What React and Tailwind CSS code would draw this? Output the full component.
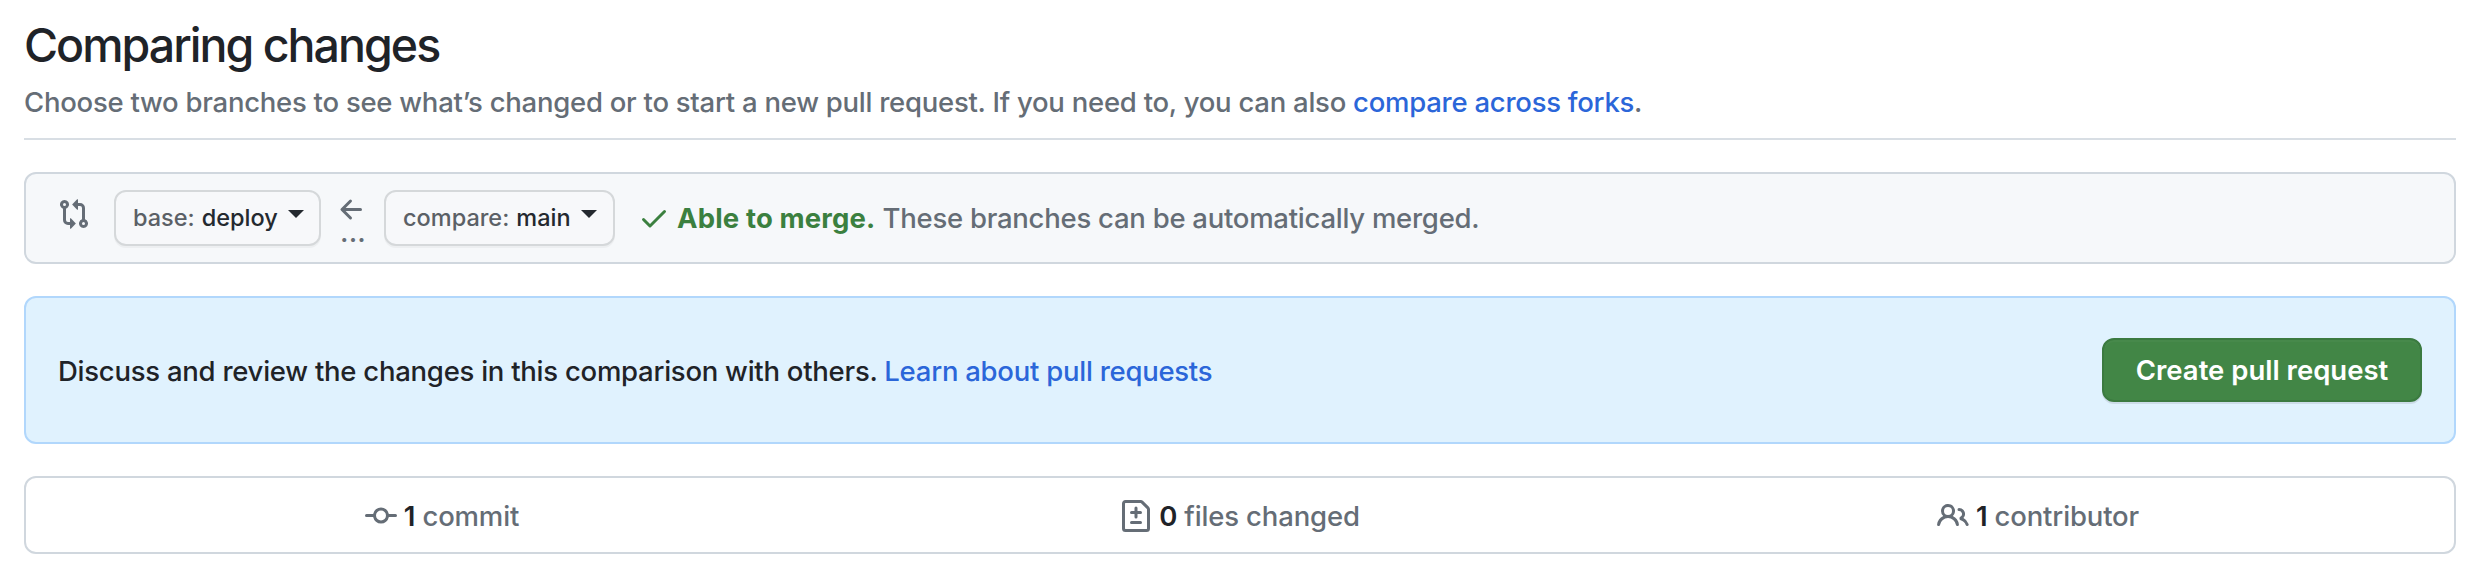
const icons = {
  compare:
    "M9.573.677L7.177 3.073a.25.25 0 000 .354l2.396 2.396A.25.25 0 0010 5.646V4h1a1 1 0 011 1v5.628a2.251 2.251 0 101.5 0V5A2.5 2.5 0 0011 2.5h-1V.854a.25.25 0 00-.427-.177zM6 12v-1.646a.25.25 0 01.427-.177l2.396 2.396a.25.25 0 010 .354l-2.396 2.396A.25.25 0 016 15.146V13.5H5A2.5 2.5 0 012.5 11V5.372a2.25 2.25 0 111.5 0V11a1 1 0 001 1h1zm6.75 0a.75.75 0 100 1.5.75.75 0 000-1.5zM4 3.25a.75.75 0 11-1.5 0 .75.75 0 011.5 0z",
  arrowLeft:
    "M7.78 12.53a.75.75 0 01-1.06 0L2.47 8.28a.75.75 0 010-1.06l4.25-4.25a.75.75 0 011.06 1.06L4.81 7h7.44a.75.75 0 010 1.5H4.81l2.97 2.97a.75.75 0 010 1.06z",
  check:
    "M13.78 4.22a.75.75 0 010 1.06l-7.25 7.25a.75.75 0 01-1.06 0L2.22 9.28a.75.75 0 011.06-1.06L6 10.94l6.72-6.72a.75.75 0 011.06 0z",
  commit:
    "M10.5 7.75a2.5 2.5 0 11-5 0 2.5 2.5 0 015 0zm1.43.75a4.002 4.002 0 01-7.86 0H.75a.75.75 0 110-1.5h3.32a4.001 4.001 0 017.86 0h3.32a.75.75 0 110 1.5h-3.32z",
  fileDiff:
    "M2.75 1.5a.25.25 0 00-.25.25v12.5c0 .138.112.25.25.25h10.5a.25.25 0 00.25-.25V4.664a.25.25 0 00-.073-.177l-2.914-2.914a.25.25 0 00-.177-.073H2.75zM1 1.75C1 .784 1.784 0 2.75 0h7.586c.464 0 .909.184 1.237.513l2.914 2.914c.329.328.513.773.513 1.237v9.586A1.75 1.75 0 0113.25 16H2.75A1.75 1.75 0 011 14.25V1.75zm7 1.5a.75.75 0 01.75.75v1.5h1.5a.75.75 0 010 1.5h-1.5v1.5a.75.75 0 01-1.5 0V7h-1.5a.75.75 0 010-1.5h1.5V4A.75.75 0 018 3.25zm-3 8a.75.75 0 01.75-.75h4.5a.75.75 0 010 1.5h-4.5a.75.75 0 01-.75-.75z",
  people:
    "M5.5 3.5a2 2 0 100 4 2 2 0 000-4zM2 5.5a3.5 3.5 0 115.898 2.549 5.507 5.507 0 013.034 4.084.75.75 0 11-1.482.235 4.001 4.001 0 00-7.9 0 .75.75 0 01-1.482-.236A5.507 5.507 0 013.102 8.05 3.49 3.49 0 012 5.5zM11 4a.75.75 0 100 1.5 1.5 1.5 0 01.666 2.844.75.75 0 00-.416.672v.352a.75.75 0 00.574.73c1.2.289 2.162 1.2 2.522 2.372a.75.75 0 101.434-.44 5.01 5.01 0 00-2.56-3.012A3 3 0 0011 4z",
};

function Icon({ name, className = "" }) {
  return (
    <svg viewBox="0 0 16 16" fill="currentColor" fillRule="evenodd" aria-hidden="true" className={`size-8 shrink-0 ${className}`}>
      <path d={icons[name]} />
    </svg>
  );
}

function BranchButton({ label, branch, className }) {
  return (
    <button
      type="button"
      className={`flex h-14 shrink-0 items-center rounded-xl border-2 border-[#d5d8da] bg-[#f7f8fa] pl-[17px] text-[23.5px] leading-10 font-medium tracking-normal text-[#24292f] shadow-[0_2px_0_rgba(27,31,36,0.04)] ${className}`}
    >
      <span className="text-[#5b6066]">{label}</span>
      <span className="ml-[7px]">{branch}</span>
      <svg viewBox="0 0 16 8" fill="currentColor" className="mb-2 ml-[10px] h-2 w-4">
        <path d="M0 0h16L8 8z" />
      </svg>
    </button>
  );
}

function Stat({ icon, count, label }) {
  return (
    <div className="flex items-center justify-center pt-0.5">
      <Icon name={icon} />
      <span className="ml-[7px] whitespace-nowrap">
        <strong className="font-semibold text-[#1f2328]">{count}</strong>
        <span className="tracking-[-0.15px]"> {label}</span>
      </span>
    </div>
  );
}

export default function App() {
  return (
    <main className="h-[564px] bg-white pt-[9px] pr-2.5 pl-6 font-['Inter','Liberation_Sans',sans-serif] text-[27.5px] leading-[42px] font-[450] tracking-[-0.255px] text-[#656d76]">
      <header className="border-b-2 border-[#d8dee4] pb-[15px]">
        <h1 className="text-[46.5px] leading-[72px] font-[450] tracking-[-1.98px] text-[#1f2328]">Comparing changes</h1>
        <p>
          Choose two branches to see what’s changed or to start a new pull request. If you need to, you can also{" "}
          <a className="text-[#2b66d9]">compare across forks</a>.
        </p>
      </header>

      <section className="mt-8 flex h-[92px] items-center rounded-xl border-2 border-[#d0d7de] bg-[#f6f8fa] pl-8">
        <Icon name="compare" className="mb-2" />
        <BranchButton label="base:" branch="deploy" className="ml-6 w-[207px]" />
        <div className="ml-[15px] flex h-14 w-8 flex-col items-center pt-1">
          <Icon name="arrowLeft" />
          <span className="-mt-2 pl-0.5 text-[28px] leading-7 font-medium tracking-[0.2px]">...</span>
        </div>
        <BranchButton label="compare:" branch="main" className="ml-4 w-[231px]" />
        <Icon name="check" className="ml-[23px] text-[#3b803f]" />
        <p className="ml-[7px]">
          <strong className="font-bold tracking-[0.15px] text-[#3b803f]">Able to merge.</strong> These branches can be automatically merged.
        </p>
      </section>

      <section className="mt-8 flex h-[148px] items-center justify-between rounded-xl border-2 border-[#b1d7fc] bg-[#e0f2fe] pr-8 pl-8">
        <p className="pt-0.5 text-[#1f2328]">
          Discuss and review the changes in this comparison with others. <a className="text-[#2b66d9]">Learn about pull requests</a>
        </p>
        <button
          type="button"
          className="h-16 w-80 rounded-xl border-2 border-[#3b7a40] bg-[#428646] font-semibold tracking-normal text-white shadow-[0_2px_0_rgba(27,31,36,0.1),inset_0_2px_0_rgba(255,255,255,0.03)]"
        >
          Create pull request
        </button>
      </section>

      <section className="mt-8 grid h-[78px] grid-cols-[832fr_764fr_832fr] rounded-xl border-2 border-[#d0d7de]">
        <Stat icon="commit" count="1" label="commit" />
        <Stat icon="fileDiff" count="0" label="files changed" />
        <Stat icon="people" count="1" label="contributor" />
      </section>
    </main>
  );
}
